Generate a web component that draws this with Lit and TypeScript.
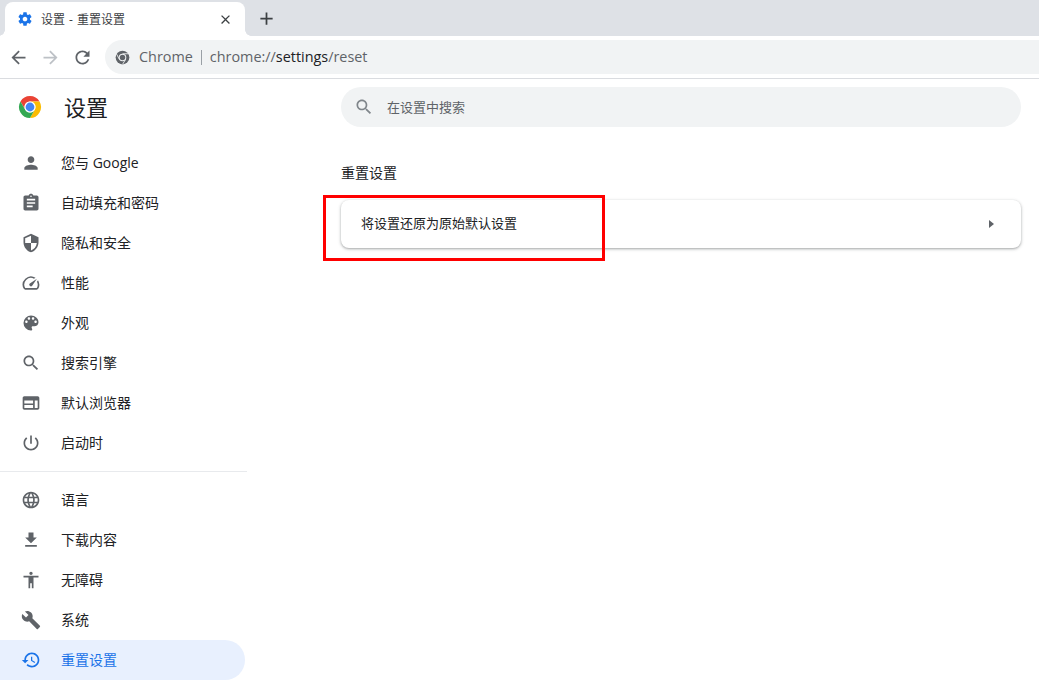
import { LitElement, html, css, svg } from "lit";
import { customElement } from "lit/decorators.js";

const P: Record<string, string> = {
  person: "M12 12c2.21 0 4-1.79 4-4s-1.79-4-4-4-4 1.79-4 4 1.79 4 4 4zm0 2c-2.67 0-8 1.34-8 4v2h16v-2c0-2.66-5.33-4-8-4z",
  assignment: "M19 3h-4.18C14.4 1.84 13.3 1 12 1c-1.3 0-2.4.84-2.82 2H5c-1.1 0-2 .9-2 2v14c0 1.1.9 2 2 2h14c1.1 0 2-.9 2-2V5c0-1.1-.9-2-2-2zm-7 0c.55 0 1 .45 1 1s-.45 1-1 1-1-.45-1-1 .45-1 1-1zm2 14H7v-2h7v2zm3-4H7v-2h10v2zm0-4H7V7h10v2z",
  shield: "M12 1L3 5v6c0 5.55 3.84 10.74 9 12 5.16-1.26 9-6.45 9-12V5l-9-4zm0 10.99h7c-.53 4.12-3.28 7.79-7 8.94V12H5V6.3l7-3.11v8.8z",
  speed: "M20.38 8.57l-1.23 1.85a8 8 0 0 1-.22 7.58H5.07A8 8 0 0 1 15.58 6.85l1.85-1.23A10 10 0 0 0 3.35 19a2 2 0 0 0 1.72 1h13.85a2 2 0 0 0 1.74-1 10 10 0 0 0-.27-10.44zm-9.79 6.84a2 2 0 0 0 2.83 0l5.66-8.49-8.49 5.66a2 2 0 0 0 0 2.83z",
  palette: "M12 3a9 9 0 0 0 0 18c.83 0 1.5-.67 1.5-1.5 0-.39-.15-.74-.39-1.01-.23-.26-.38-.61-.38-.99 0-.83.67-1.5 1.5-1.5H16c2.76 0 5-2.24 5-5 0-4.42-4.03-8-9-8zm-5.5 9c-.83 0-1.5-.67-1.5-1.5S5.67 9 6.5 9 8 9.67 8 10.5 7.33 12 6.5 12zm3-4C8.67 8 8 7.33 8 6.5S8.67 5 9.5 5s1.5.67 1.5 1.5S10.33 8 9.5 8zm5 0c-.83 0-1.5-.67-1.5-1.5S13.67 5 14.5 5s1.5.67 1.5 1.5S15.33 8 14.5 8zm3 4c-.83 0-1.5-.67-1.5-1.5S16.67 9 17.5 9s1.5.67 1.5 1.5-.67 1.5-1.5 1.5z",
  search: "M15.5 14h-.79l-.28-.27C15.41 12.59 16 11.11 16 9.5 16 5.91 13.09 3 9.5 3S3 5.91 3 9.5 5.91 16 9.5 16c1.61 0 3.09-.59 4.23-1.57l.27.28v.79l5 4.99L20.49 19l-4.99-5zm-6 0C7.01 14 5 11.99 5 9.5S7.01 5 9.5 5 14 7.01 14 9.5 11.99 14 9.5 14z",
  web: "M20 4H4c-1.1 0-2 .9-2 2v12c0 1.1.9 2 2 2h16c1.1 0 2-.9 2-2V6c0-1.1-.9-2-2-2zM4 9h10.5v3.5H4V9zm0 5.5h10.5V18H4v-3.5zM20 18h-3.5V9H20v9z",
  power: "M13 3h-2v10h2V3zm4.83 2.17l-1.42 1.42C17.99 7.86 19 9.81 19 12c0 3.87-3.13 7-7 7s-7-3.13-7-7c0-2.19 1.01-4.14 2.58-5.42L6.17 5.17C4.23 6.82 3 9.26 3 12c0 4.97 4.03 9 9 9s9-4.03 9-9c0-2.74-1.23-5.18-3.17-6.83z",
  language: "M11.99 2C6.47 2 2 6.48 2 12s4.47 10 9.99 10C17.52 22 22 17.52 22 12S17.52 2 11.99 2zm6.93 6h-2.95c-.32-1.25-.78-2.45-1.38-3.56 1.84.63 3.37 1.91 4.33 3.56zM12 4.04c.83 1.2 1.48 2.53 1.91 3.96h-3.82c.43-1.43 1.08-2.76 1.91-3.96zM4.26 14C4.1 13.36 4 12.69 4 12s.1-1.36.26-2h3.38c-.08.66-.14 1.32-.14 2 0 .68.06 1.34.14 2H4.26zm.82 2h2.95c.32 1.25.78 2.45 1.38 3.56-1.84-.63-3.37-1.9-4.33-3.56zm2.95-8H5.08c.96-1.66 2.49-2.93 4.33-3.56C8.81 5.55 8.35 6.75 8.03 8zM12 19.96c-.83-1.2-1.48-2.53-1.91-3.96h3.82c-.43 1.43-1.08 2.76-1.91 3.96zM14.34 14H9.66c-.09-.66-.16-1.32-.16-2 0-.68.07-1.35.16-2h4.68c.09.65.16 1.32.16 2 0 .68-.07 1.34-.16 2zm.25 5.56c.6-1.11 1.06-2.31 1.38-3.56h2.95c-.96 1.65-2.49 2.93-4.33 3.56zM16.36 14c.08-.66.14-1.32.14-2 0-.68-.06-1.34-.14-2h3.38c.16.64.26 1.31.26 2s-.1 1.36-.26 2h-3.38z",
  download: "M19 9h-4V3H9v6H5l7 7 7-7zM5 18v2h14v-2H5z",
  access: "M12 2c1.1 0 2 .9 2 2s-.9 2-2 2-2-.9-2-2 .9-2 2-2zm9 7h-6v13h-2v-6h-2v6H9V9H3V7h18v2z",
  build: "M22.7 19l-9.1-9.1c.9-2.3.4-5-1.5-6.9-2-2-5-2.4-7.4-1.3L9 6 6 9 1.6 4.7C.4 7.1.9 10.1 2.9 12.1c1.9 1.9 4.6 2.4 6.9 1.5l9.1 9.1c.4.4 1 .4 1.4 0l2.3-2.3c.5-.4.5-1.1.1-1.4z",
  restore: "M13 3c-4.97 0-9 4.03-9 9H1l3.89 3.89.07.14L9 12H6c0-3.87 3.13-7 7-7s7 3.13 7 7-3.13 7-7 7c-1.93 0-3.68-.79-4.94-2.06l-1.42 1.42C8.27 19.99 10.51 21 13 21c4.97 0 9-4.03 9-9s-4.03-9-9-9zm-1 5v5l4.28 2.54.72-1.21-3.5-2.08V8H12z",
  gear: "M19.43 12.98c.04-.32.07-.64.07-.98s-.03-.66-.07-.98l2.11-1.65c.19-.15.24-.42.12-.64l-2-3.46c-.12-.22-.39-.3-.61-.22l-2.49 1c-.52-.4-1.08-.73-1.69-.98l-.38-2.65C14.46 2.18 14.25 2 14 2h-4c-.25 0-.46.18-.49.42l-.38 2.65c-.61.25-1.17.59-1.69.98l-2.49-1c-.23-.09-.49 0-.61.22l-2 3.46c-.13.22-.07.49.12.64l2.11 1.65c-.04.32-.07.65-.07.98s.03.66.07.98l-2.11 1.65c-.19.15-.24.42-.12.64l2 3.46c.12.22.39.3.61.22l2.49-1c.52.4 1.08.73 1.69.98l.38 2.65c.03.24.24.42.49.42h4c.25 0 .46-.18.49-.42l.38-2.65c.61-.25 1.17-.59 1.69-.98l2.49 1c.23.09.49 0 .61-.22l2-3.46c.12-.22.07-.49-.12-.64l-2.11-1.65zM12 15.5c-1.93 0-3.5-1.57-3.5-3.5s1.57-3.5 3.5-3.5 3.5 1.57 3.5 3.5-1.57 3.5-3.5 3.5z",
  close: "M19 6.41L17.59 5 12 10.59 6.41 5 5 6.41 10.59 12 5 17.59 6.41 19 12 13.41 17.59 19 19 17.59 13.41 12z",
  add: "M19 13h-6v6h-2v-6H5v-2h6V5h2v6h6v2z",
  arrow: "M20 11H7.83l5.59-5.59L12 4l-8 8 8 8 1.41-1.41L7.83 13H20v-2z",
  reload: "M17.65 6.35C16.2 4.9 14.21 4 12 4c-4.42 0-7.99 3.58-7.99 8s3.57 8 7.99 8c3.73 0 6.84-2.55 7.73-6h-2.08c-.82 2.33-3.04 4-5.65 4-3.31 0-6-2.69-6-6s2.69-6 6-6c1.66 0 3.14.69 4.22 1.78L13 11h7V4l-2.35 2.35z",
};

const icon = (n: string, cls = "") =>
  html`<svg class="ic ${cls}" viewBox="0 0 24 24"><path d=${P[n]}></path></svg>`;

const chromeLogo = svg`
  <path fill="#ea4335" d="M12 1A11 11 0 0 1 21.53 6.5H12A5.5 5.5 0 0 0 7.24 14.75L2.47 6.5A11 11 0 0 1 12 1Z"/>
  <path fill="#fbbc04" d="M21.53 6.5A11 11 0 0 1 12 23L16.76 14.75A5.5 5.5 0 0 0 12 6.5H21.53Z"/>
  <path fill="#34a853" d="M12 23A11 11 0 0 1 2.47 6.5L7.24 14.75A5.5 5.5 0 0 0 16.76 14.75Z"/>
  <circle cx="12" cy="12" r="5.5" fill="#fff"/>
  <circle cx="12" cy="12" r="4.4" fill="#4285f4"/>`;

const top = [
  ["person", "您与 Google"],
  ["assignment", "自动填充和密码"],
  ["shield", "隐私和安全"],
  ["speed", "性能"],
  ["palette", "外观"],
  ["search", "搜索引擎"],
  ["web", "默认浏览器"],
  ["power", "启动时"],
];
const bottom = [
  ["language", "语言"],
  ["download", "下载内容"],
  ["access", "无障碍"],
  ["build", "系统"],
  ["restore", "重置设置", true],
];

@customElement("app-root")
export class AppRoot extends LitElement {
  static styles = css`
    :host {
      display: block;
      position: relative;
      width: 100%;
      height: 680px;
      overflow: hidden;
      background: #fff;
      color: #202124;
      font-family: "Open Sans", "Noto Sans CJK SC", sans-serif;
    }
    .ic { display: block; fill: currentColor; flex: none; }
    .strip { height: 36px; background: #dee1e6; display: flex; align-items: flex-end; padding-left: 5px; box-sizing: border-box; }
    .tab {
      position: relative; width: 240px; height: 34px; background: #fff; border-radius: 8px 8px 0 0;
      display: flex; align-items: center; padding: 0 12px 0 12px; box-sizing: border-box; font-size: 12px; color: #3c4043;
    }
    .tab::before, .tab::after { content: ""; position: absolute; bottom: 0; width: 6px; height: 6px; }
    .tab::before { left: -6px; background: radial-gradient(circle at 0 0, #dee1e6 5.5px, #fff 6px); }
    .tab::after { right: -6px; background: radial-gradient(circle at 100% 0, #dee1e6 5.5px, #fff 6px); }
    .fav { width: 16px; height: 16px; color: #1a73e8; margin-right: 8px; }
    .tab-title { flex: 1; padding-bottom: 1px; word-spacing: 1px; }
    .x { width: 15px; height: 15px; color: #3c4043; }
    .plus { width: 21px; height: 21px; color: #3c4043; margin: 0 0 7px 11px; }
    .toolbar {
      height: 43px; box-sizing: border-box; border-bottom: 1px solid #dadce0; padding-top: 4px; display: flex; align-items: flex-start;
    }
    .nav-btns { display: flex; align-items: center; height: 34px; padding-left: 8px; gap: 11px; width: 95px; box-sizing: border-box; color: #5f6368; }
    .nav-btns .ic { width: 21px; height: 21px; }
    .fwd { color: #bdc1c6; transform: scaleX(-1); }
    .omni {
      flex: 1; height: 34px; margin-left: 10px; background: #f1f3f4; border-radius: 17px 0 0 17px;
      display: flex; align-items: center; padding-left: 10px; font-size: 14.4px; color: #5f6368;
    }
    .omni svg { width: 15px; height: 15px; margin-right: 9px; flex: none; }
    .omni .t { padding-bottom: 1px; }
    .sep { width: 1px; height: 15px; background: #9aa0a6; margin: 0 8px 0 8px; }
    .dark { color: #202124; }
    .body { display: flex; height: 601px; }
    .side { width: 247px; flex: none; }
    .brand { height: 64px; display: flex; align-items: center; padding: 0 0 8px 18px; box-sizing: border-box; gap: 23px; font-size: 22px; }
    .brand svg { width: 24px; height: 24px; flex: none; }
    .brand span { padding-bottom: 2px; margin-left: -1px; }
    .item { height: 40px; width: 245px; display: flex; align-items: center; padding-left: 21px; box-sizing: border-box; gap: 20px; font-size: 14px; color: #202124; border-radius: 0 20px 20px 0; }
    .item span { padding-bottom: 2px; }
    .item .ic { width: 20px; height: 20px; color: #5f6368; }
    .item.on { background: #e8f0fe; color: #1a73e8; }
    .item.on .ic { color: #1a73e8; }
    .rule { border-top: 1px solid #e8eaed; margin: 8px 0 8px; }
    .main { flex: 1; padding: 8px 18px 0 94px; }
    .search { height: 40px; border-radius: 20px; background: #f1f3f4; display: flex; align-items: center; padding-left: 13px; font-size: 13px; color: #5f6368; gap: 13px; }
    .search span { padding-bottom: 2px; }
    .search .ic { width: 20px; height: 20px; color: #80868b; }
    .h { font-size: 14px; font-weight: 400; margin: 36px 0 0 0; height: 20px; line-height: 20px; color: #202124; }
    .card {
      margin-top: 17px; height: 48px; border-radius: 8px; background: #fff; display: flex; align-items: center;
      justify-content: space-between; padding: 0 27px 0 20px; font-size: 13px; color: #202124;
      box-shadow: 0 1px 2px rgba(60,64,67,.3), 0 1px 3px 1px rgba(60,64,67,.15);
    }
    .card span:first-child { padding-bottom: 3px; }
    .tri { width: 0; height: 0; border-left: 5px solid #5f6368; border-top: 4.5px solid transparent; border-bottom: 4.5px solid transparent; }
    .mark { position: absolute; left: 323px; top: 195px; width: 282px; height: 66px; box-sizing: border-box; border: 3px solid #f00; pointer-events: none; }
  `;

  private row(r: any[]) {
    return html`<div class="item ${r[2] ? "on" : ""}">${icon(r[0])}<span>${r[1]}</span></div>`;
  }

  render() {
    return html`
      <div class="strip">
        <div class="tab">
          ${icon("gear", "fav")}
          <span class="tab-title">设置 - 重置设置</span>
          ${icon("close", "x")}
        </div>
        ${icon("add", "plus")}
      </div>
      <div class="toolbar">
        <div class="nav-btns">
          ${icon("arrow")}
          ${icon("arrow", "fwd")}
          ${icon("reload")}
        </div>
        <div class="omni">
          <svg viewBox="0 0 24 24">
            <circle cx="12" cy="12" r="11" fill="#5f6368"></circle>
            <circle cx="12" cy="12" r="6" fill="#f1f3f4"></circle>
            <circle cx="12" cy="12" r="4.4" fill="#5f6368"></circle>
            <path d="M12 6H21.5M7 15L2.5 6.5M17 15L12 23" stroke="#f1f3f4" stroke-width="1.4" fill="none"></path>
          </svg>
          <span class="t">Chrome</span><span class="sep"></span>
          <span class="t">chrome://<span class="dark">settings</span>/reset</span>
        </div>
      </div>
      <div class="body">
        <div class="side">
          <div class="brand"><svg viewBox="0 0 24 24">${chromeLogo}</svg><span>设置</span></div>
          ${top.map((r) => this.row(r))}
          <div class="rule"></div>
          ${bottom.map((r) => this.row(r))}
        </div>
        <div class="main">
          <div class="search">${icon("search")}<span>在设置中搜索</span></div>
          <h2 class="h">重置设置</h2>
          <div class="card"><span>将设置还原为原始默认设置</span><span class="tri"></span></div>
        </div>
      </div>
      <div class="mark"></div>
    `;
  }
}
